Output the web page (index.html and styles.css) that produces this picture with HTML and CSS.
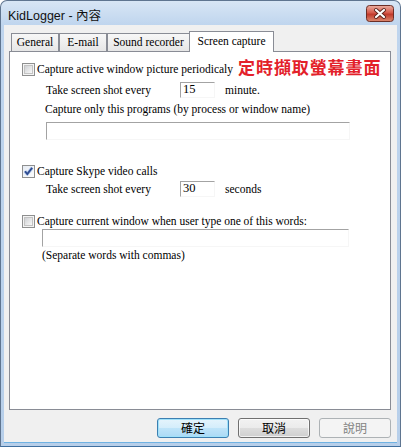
FILE: index.html
```html
<!DOCTYPE html>
<html>
<head>
    <meta charset="utf-8">
    <title>KidLogger - 內容</title>
    <link rel="stylesheet" href="styles.css">
</head>
<body>
<div class="window">
    <div class="titlebar">
        <span class="title">KidLogger - 內容</span>
        <span class="close-btn">
            <svg width="28" height="17" viewBox="0 0 28 17">
                <defs>
                    <linearGradient id="closeGrad" x1="0" y1="0" x2="0" y2="1">
                        <stop offset="0" stop-color="#eab0a2"/>
                        <stop offset="0.45" stop-color="#d65a4b"/>
                        <stop offset="0.55" stop-color="#c13a2c"/>
                        <stop offset="1" stop-color="#dc8a70"/>
                    </linearGradient>
                </defs>
                <rect x="0.5" y="0.5" width="27" height="16" rx="3" fill="url(#closeGrad)" stroke="#6b2e26"/>
                <path d="M10 5 L18 12 M18 5 L10 12" stroke="#5a231c" stroke-width="4" stroke-linecap="round"/>
                <path d="M10 5 L18 12 M18 5 L10 12" stroke="#fff" stroke-width="2.2" stroke-linecap="round"/>
            </svg>
        </span>
    </div>

    <div class="client">
        <div class="tabs">
            <div class="tab tab-general">General</div>
            <div class="tab tab-email">E-mail</div>
            <div class="tab tab-sound">Sound recorder</div>
            <div class="tab tab-active">Screen capture</div>
        </div>

        <div class="panel">
            <div class="row row-check row-1">
                <span class="check"><span class="check-inner"></span></span>
                <span class="label">Capture active window picture periodicaly</span>
                <span class="note">定時擷取螢幕畫面</span>
            </div>
            <div class="row row-field row-2">
                <span class="field-label">Take screen shot every</span>
                <span class="field field-small">15</span>
                <span class="unit">minute.</span>
            </div>
            <div class="row row-text row-3">Capture only this programs (by process or window name)</div>
            <div class="row row-4">
                <span class="field field-wide"></span>
            </div>

            <div class="row row-check row-5">
                <span class="check checked">
                    <svg width="11" height="11" viewBox="0 0 11 11">
                        <path d="M2 5.2 L4.3 8 L9.2 1.8" fill="none" stroke="#a9c1e8" stroke-width="3.2" stroke-linejoin="round"/>
                        <path d="M2 5.2 L4.3 8 L9.2 1.8" fill="none" stroke="#2d4a8f" stroke-width="1.8"/>
                    </svg>
                </span>
                <span class="label">Capture Skype video calls</span>
            </div>
            <div class="row row-field row-6">
                <span class="field-label">Take screen shot every</span>
                <span class="field field-small">30</span>
                <span class="unit">seconds</span>
            </div>

            <div class="row row-check row-7">
                <span class="check"><span class="check-inner"></span></span>
                <span class="label">Capture current window when user type one of this words:</span>
            </div>
            <div class="row row-8">
                <span class="field field-words"></span>
            </div>
            <div class="row row-text row-9">(Separate words with commas)</div>
        </div>

        <div class="buttons">
            <span class="btn btn-default">確定</span>
            <span class="btn">取消</span>
            <span class="btn btn-disabled">說明</span>
        </div>
    </div>
</div>
</body>
</html>
```

FILE: styles.css
```css
* {
    box-sizing: border-box;
    margin: 0;
    padding: 0;
}

html, body {
    width: 401px;
    height: 447px;
    overflow: hidden;
    background: #fff;
}

.window {
    width: 401px;
    height: 447px;
    border: 1px solid #5f7590;
    border-bottom-color: #3f6f9f;
    border-radius: 7px 7px 0 0;
    background: linear-gradient(#d8e6f5 0, #bfd5ee 24px, #b7cfea 100%);
    padding: 0 3px 3px;
    display: flex;
    flex-direction: column;
}

.titlebar {
    height: 24px;
    display: flex;
    align-items: center;
    justify-content: space-between;
    padding: 0 3px 0 4px;
}

.title {
    font: 12.5px "Liberation Sans", "Noto Sans CJK TC", sans-serif;
    color: #111;
    padding-top: 2px;
}

.close-btn {
    display: flex;
    width: 28px;
    height: 17px;
    margin-top: 1px;
}

.client {
    height: 418px;
    background: #f0f0f0;
    padding: 6px 6px 0 5px;
    border-bottom: 1px solid #6fb2e2;
}

/* tabs */
.tabs {
    display: flex;
    align-items: flex-end;
    height: 20px;
    margin-left: 2px;
}

.tab {
    height: 18px;
    border: 1px solid #898c95;
    border-bottom: none;
    background: linear-gradient(#f7f7f7, #e6e6e6);
    font: 11.5px "Liberation Serif", "Times New Roman", serif;
    line-height: 16px;
    text-align: center;
    color: #000;
}

.tab-general { width: 48px; }
.tab-email { width: 48px; }
.tab-sound { width: 83px; }

.tab-active {
    width: 85px;
    height: 21px;
    margin-left: -1px;
    margin-bottom: -1px;
    line-height: 18px;
    background: #fff;
    position: relative;
    z-index: 1;
}

/* panel */
.panel {
    width: 382px;
    height: 359px;
    border: 1px solid #898c95;
    background: #fff;
    padding-left: 12px;
    font: 11.5px "Liberation Serif", "Times New Roman", serif;
    color: #000;
}

.row {
    display: flex;
    align-items: center;
    white-space: nowrap;
}

.row-check { height: 13px; line-height: 13px; }
.row-field { height: 16px; margin-left: 24px; }
.row-text { height: 14px; line-height: 14px; margin-left: 23px; }

.row-1 { margin-top: 11px; }
.row-2 { margin-top: 6px; }
.row-3 { margin-top: 4px; }
.row-4 { margin-top: 6px; margin-left: 24px; }
.row-5 { margin-top: 25px; }
.row-6 { margin-top: 3px; }
.row-7 { margin-top: 18px; }
.row-8 { margin-top: 1px; margin-left: 20px; }
.row-9 { margin-top: 1px; margin-left: 20px; }

.check {
    width: 13px;
    height: 13px;
    flex: none;
    border: 1px solid #8e8f8f;
    background: #f4f4f4;
    display: flex;
    align-items: center;
    justify-content: center;
    margin-right: 2px;
}

.check-inner {
    width: 9px;
    height: 9px;
    border: 1px solid #c3c3c3;
    background: linear-gradient(135deg, #cfd1d4, #f8f8f8);
}

.check.checked {
    background: linear-gradient(135deg, #e6ebf2, #fbfcfd);
}

.note {
    margin-left: 5px;
    margin-bottom: 6px;
    font: bold 17px "Noto Sans CJK TC", sans-serif;
    line-height: 17px;
    letter-spacing: 0.9px;
    color: #e3212a;
}

.field-label {
    width: 134px;
}

.field {
    display: block;
    border: 1px solid;
    border-color: #a3a3a3 #f6f6f6 #f6f6f6 #a3a3a3;
    background: #fff;
    padding: 0 2px;
    line-height: 13px;
}

.field-small {
    width: 35px;
    height: 16px;
    font-size: 12.5px;
}

.unit {
    margin-left: 10px;
}

.field-wide {
    width: 304px;
    height: 18px;
}

.field-words {
    width: 307px;
    height: 18px;
}

/* buttons */
.buttons {
    display: flex;
    justify-content: flex-end;
    gap: 9px;
    margin-top: 8px;
}

.btn {
    width: 72px;
    height: 20px;
    border: 1px solid #707070;
    border-radius: 3px;
    background: linear-gradient(#f2f2f2 0%, #ebebeb 50%, #dddddd 50%, #cfcfcf 100%);
    box-shadow: inset 0 0 0 1px rgba(255, 255, 255, 0.7);
    font: 12px "Noto Sans CJK TC", sans-serif;
    line-height: 18px;
    text-align: center;
    color: #000;
}

.btn-default {
    border-color: #3c7fb1;
    background: linear-gradient(#e5f4fc 0%, #d4edfb 50%, #bfe4f9 50%, #abdaf5 100%);
    box-shadow: inset 0 0 0 1px #9fe1fa;
}

.btn-disabled {
    border-color: #adb2b5;
    background: #f4f4f4;
    box-shadow: none;
    color: #838383;
}
```
